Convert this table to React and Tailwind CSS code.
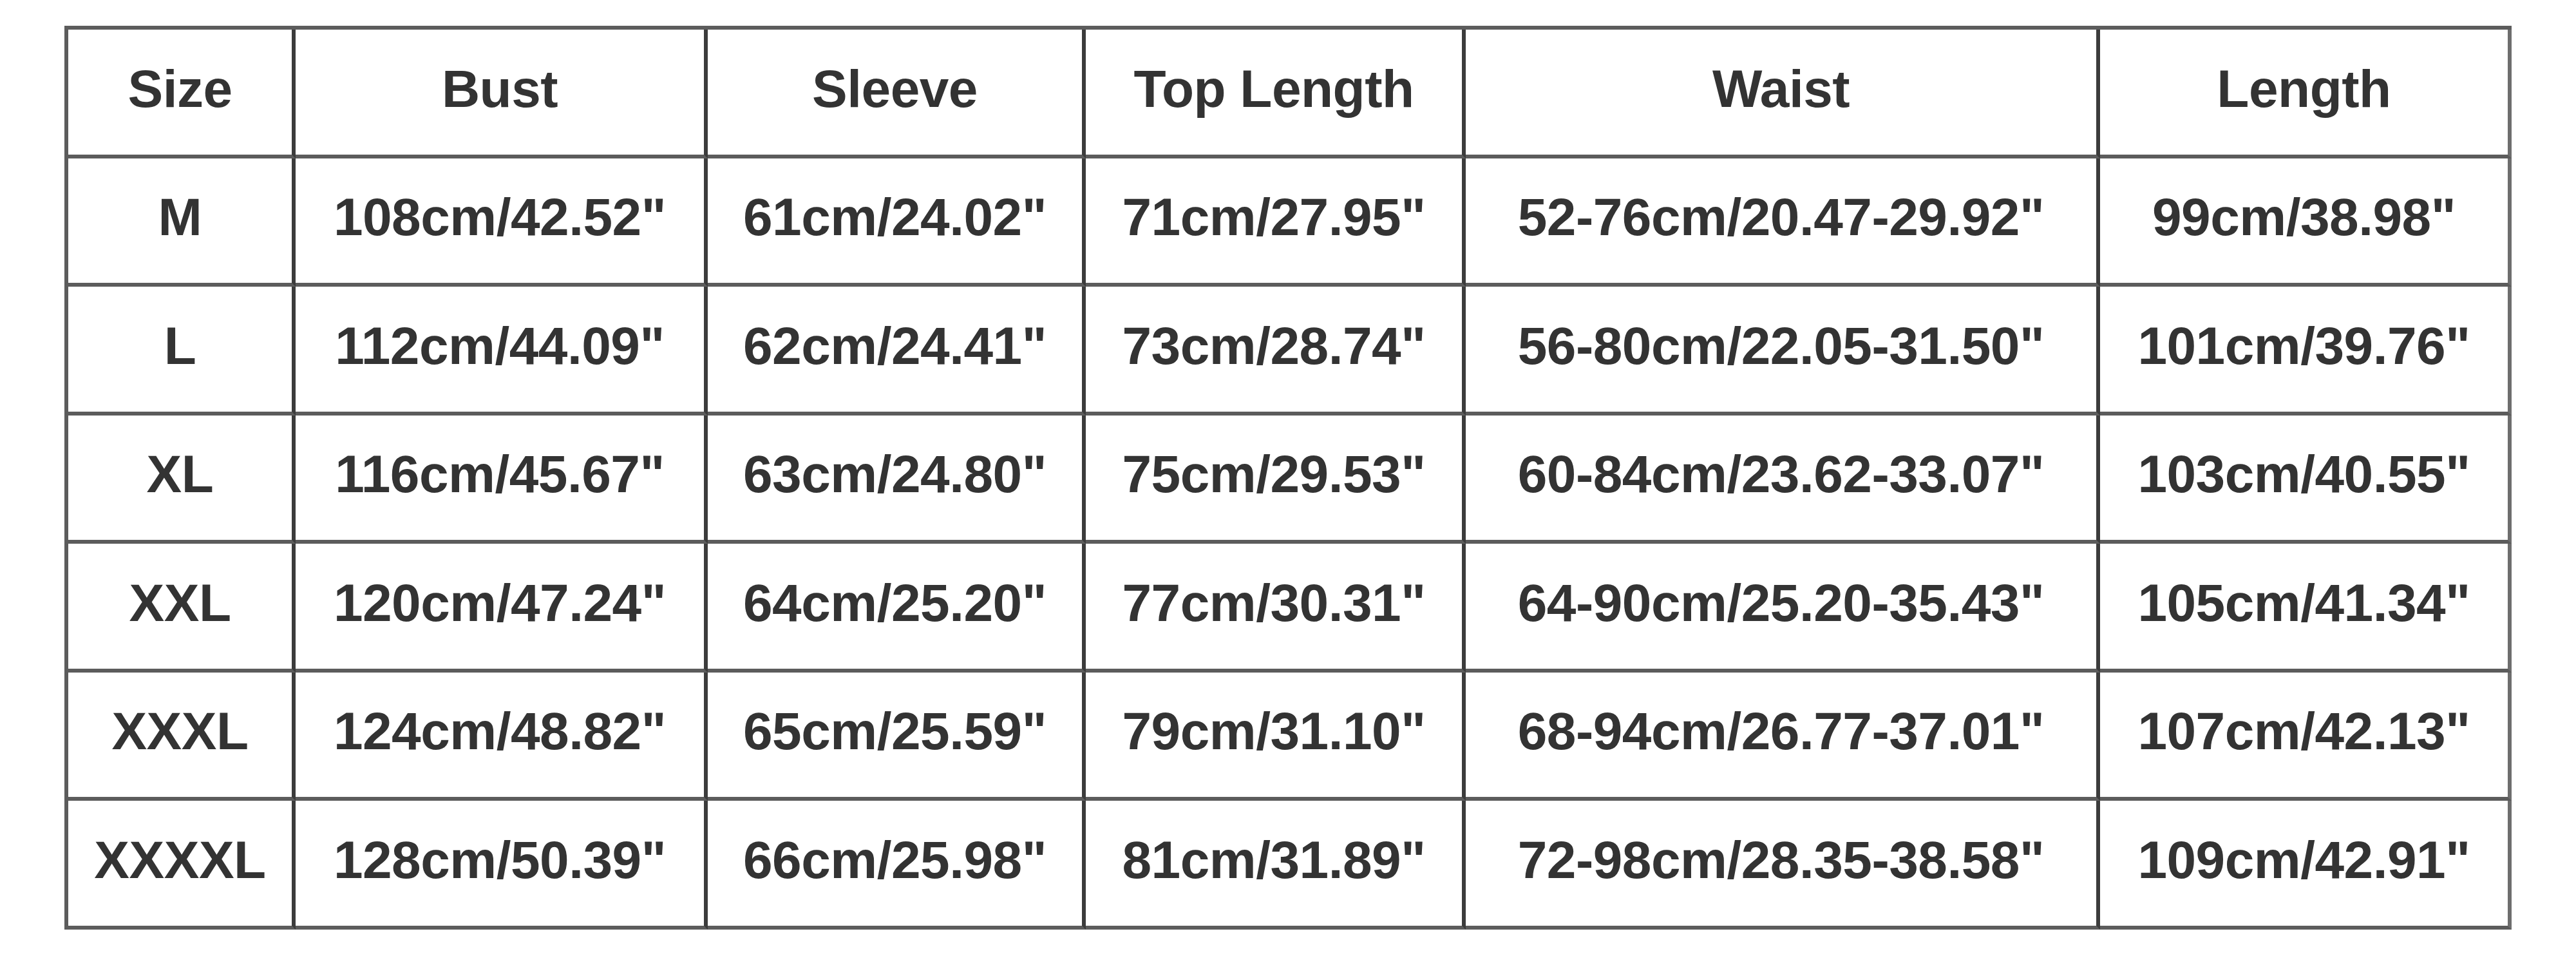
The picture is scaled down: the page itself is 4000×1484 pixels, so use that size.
import React from 'react';

const columns = [
  { key: 'size', label: 'Size', width: 'w-[353px]' },
  { key: 'bust', label: 'Bust', width: 'w-[640px]' },
  { key: 'sleeve', label: 'Sleeve', width: 'w-[587px]' },
  { key: 'top', label: 'Top Length', width: 'w-[590px]' },
  { key: 'waist', label: 'Waist', width: 'w-[985px]' },
  { key: 'length', label: 'Length', width: 'w-[639px]' },
];

const rows = [
  ['M', '108cm/42.52"', '61cm/24.02"', '71cm/27.95"', '52-76cm/20.47-29.92"', '99cm/38.98"'],
  ['L', '112cm/44.09"', '62cm/24.41"', '73cm/28.74"', '56-80cm/22.05-31.50"', '101cm/39.76"'],
  ['XL', '116cm/45.67"', '63cm/24.80"', '75cm/29.53"', '60-84cm/23.62-33.07"', '103cm/40.55"'],
  ['XXL', '120cm/47.24"', '64cm/25.20"', '77cm/30.31"', '64-90cm/25.20-35.43"', '105cm/41.34"'],
  ['XXXL', '124cm/48.82"', '65cm/25.59"', '79cm/31.10"', '68-94cm/26.77-37.01"', '107cm/42.13"'],
  ['XXXXL', '128cm/50.39"', '66cm/25.98"', '81cm/31.89"', '72-98cm/28.35-38.58"', '109cm/42.91"'],
];

const Cell = ({ width, last, children }) => (
  <div
    className={`${width} h-[199.5px] shrink-0 border-r-[6px] border-b-[6px] ${last ? 'border-r-[#6e6e6e]' : 'border-r-[#3c3c3c]'} border-b-[#5c5c5c] flex items-center justify-center pb-[10px]`}
  >
    <span className="text-[82px] leading-none font-bold text-[#333333] tracking-[-0.5px] whitespace-nowrap">
      {children}
    </span>
  </div>
);

export default function App() {
  return (
    <div
      className="w-[4000px] h-[1484px] bg-white pt-[40px] pl-[100px]"
      style={{ fontFamily: '"Liberation Sans", Arial, sans-serif' }}
    >
      <div className="inline-flex flex-col border-l-[6px] border-t-[6px] border-[#5c5c5c]">
        <div className="flex">
          {columns.map((col, i) => (
            <Cell key={col.key} width={col.width} last={i === columns.length - 1}>
              {col.label}
            </Cell>
          ))}
        </div>
        {rows.map((row) => (
          <div key={row[0]} className="flex">
            {row.map((value, i) => (
              <Cell key={columns[i].key} width={columns[i].width} last={i === row.length - 1}>
                {value}
              </Cell>
            ))}
          </div>
        ))}
      </div>
    </div>
  );
}
